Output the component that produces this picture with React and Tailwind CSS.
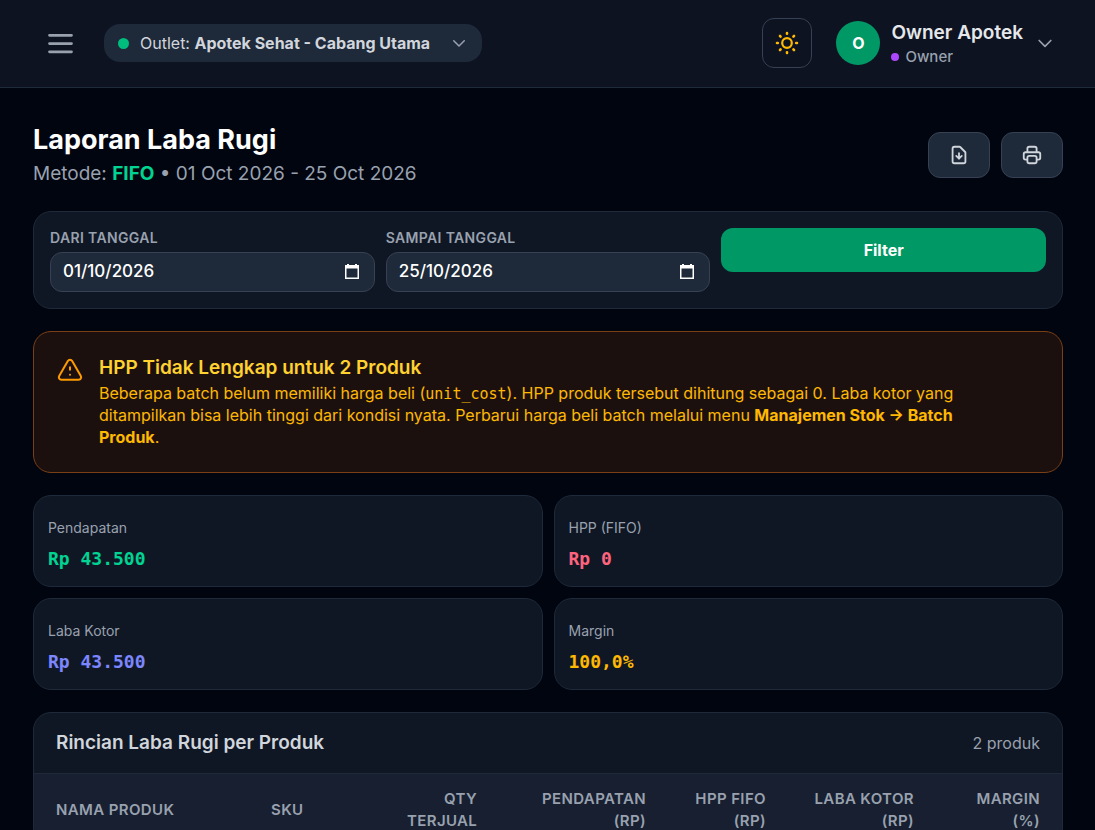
import { useState } from "react";

const STATS = [
  { label: "Pendapatan", value: "Rp 43.500", color: "text-emerald-400" },
  { label: "HPP (FIFO)", value: "Rp 0", color: "text-rose-400" },
  { label: "Laba Kotor", value: "Rp 43.500", color: "text-indigo-400" },
  { label: "Margin", value: "100,0%", color: "text-amber-400" },
];

const COLUMNS = [
  { label: "Nama Produk", width: "w-[215px]", align: "text-left" },
  { label: "SKU", width: "w-[136px]", align: "text-left" },
  { label: "Qty Terjual", width: "w-[114px]", align: "text-right" },
  { label: "Pendapatan (Rp)", width: "w-[169px]", align: "text-right" },
  { label: "HPP FIFO (Rp)", width: "w-[120px]", align: "text-right" },
  { label: "Laba Kotor (Rp)", width: "w-[148px]", align: "text-right" },
  { label: "Margin (%)", width: "w-[126px]", align: "text-right" },
];

const ChevronDown = ({ className }) => (
  <svg className={className} fill="none" viewBox="0 0 24 24" stroke="currentColor">
    <path strokeLinecap="round" strokeLinejoin="round" strokeWidth={2} d="M19 9l-7 7-7-7" />
  </svg>
);

const Header = () => (
  <header className="flex items-center justify-between border-b border-gray-800 bg-[#0d1321] pt-[18px] pr-10 pb-[19px] pl-11">
    <div className="flex items-center gap-[27px]">
      <button type="button" aria-label="Buka menu" className="text-gray-400">
        <svg className="h-[33px] w-[33px]" fill="none" viewBox="0 0 24 24" stroke="currentColor">
          <path strokeLinecap="round" strokeWidth={2} d="M4 6h16M4 12h16M4 18h16" />
        </svg>
      </button>
      <button
        type="button"
        className="flex h-[38px] items-center rounded-2xl bg-gray-800 px-[14px] text-base text-gray-300"
      >
        <span className="mr-[11px] h-[11px] w-[11px] rounded-full bg-emerald-500" />
        <span>
          Outlet: <span className="font-bold">Apotek Sehat - Cabang Utama</span>
        </span>
        <ChevronDown className="ml-5 h-[18px] w-[18px] text-gray-400" />
      </button>
    </div>

    <div className="flex items-center gap-6">
      <button
        type="button"
        aria-label="Ganti tema"
        className="flex h-[50px] w-[50px] items-center justify-center rounded-xl border border-gray-700 text-amber-400"
      >
        <svg className="h-6 w-6" fill="none" viewBox="0 0 24 24" stroke="currentColor">
          <circle cx="12" cy="12" r="4.8" strokeWidth={2.2} />
          <path
            strokeLinecap="round"
            strokeWidth={2.6}
            d="M12 2v.8M12 21.2v.8M2 12h.8M21.2 12h.8M5 5l.6.6M18.4 18.4l.6.6M5 19l.6-.6M18.4 5.6l.6-.6"
          />
        </svg>
      </button>
      <button type="button" className="flex items-center text-left">
        <span className="mr-[11px] flex h-11 w-11 items-center justify-center rounded-full bg-emerald-600 text-base font-bold text-white">
          O
        </span>
        <span className="mr-3">
          <span className="block text-[19px] leading-7 font-semibold text-gray-200">Owner Apotek</span>
          <span className="flex items-center gap-[6px] text-[15px] leading-5 font-medium text-gray-400">
            <span className="h-2 w-2 rounded-full bg-purple-500" />
            Owner
          </span>
        </span>
        <ChevronDown className="h-5 w-5 text-gray-400" />
      </button>
    </div>
  </header>
);

const DateField = ({ id, label, value, onChange }) => (
  <div>
    <label htmlFor={id} className="mb-1 block text-sm leading-5 font-semibold tracking-wide text-gray-400 uppercase">
      {label}
    </label>
    <div className="flex h-10 items-center rounded-xl border border-gray-700 bg-gray-800 px-3">
      <input
        id={id}
        type="text"
        inputMode="numeric"
        value={value}
        onChange={(e) => onChange(e.target.value)}
        className="min-w-0 flex-1 bg-transparent text-[17px] font-medium text-white outline-none"
      />
      <button type="button" aria-label={`Pilih ${label}`} className="px-[2px] text-white">
        <svg className="h-4 w-4" viewBox="0 0 16 16" fill="currentColor">
          <path d="M3 0h2v1h6V0h2v1h2v14H1V1h2zM2.5 4.500v9h11v-9z" fillRule="evenodd" />
        </svg>
      </button>
    </div>
  </div>
);

const App = () => {
  const [from, setFrom] = useState("01/10/2026");
  const [to, setTo] = useState("25/10/2026");

  return (
    <div className="min-h-screen bg-[#01050f] font-['Inter',sans-serif] text-gray-300">
      <Header />

      <main className="flex flex-col gap-[22px] pt-[33px] pr-8 pb-8 pl-[33px]">
        {/* Title + export buttons */}
        <div className="flex items-center justify-between">
          <div>
            <h1 className="text-[27px] leading-[38px] font-bold text-white">Laporan Laba Rugi</h1>
            <p className="text-[19px] leading-[30px] text-gray-400">
              Metode: <span className="font-bold text-emerald-400">FIFO</span> • 01 Oct 2026 - 25 Oct 2026
            </p>
          </div>
          <div className="flex gap-[11px] text-gray-300">
            <button
              type="button"
              aria-label="Unduh laporan"
              className="flex h-[46px] w-[62px] items-center justify-center rounded-xl border border-gray-700 bg-gray-800"
            >
              <svg className="h-[22px] w-[22px]" fill="none" viewBox="0 0 24 24" stroke="currentColor">
                <path
                  strokeLinecap="round"
                  strokeLinejoin="round"
                  strokeWidth={2}
                  d="M12 10v6m0 0l-3-3m3 3l3-3m2 8H7a2 2 0 01-2-2V5a2 2 0 012-2h5.586a1 1 0 01.707.293l5.414 5.414a1 1 0 01.293.707V19a2 2 0 01-2 2z"
                />
              </svg>
            </button>
            <button
              type="button"
              aria-label="Cetak laporan"
              className="flex h-[46px] w-[62px] items-center justify-center rounded-xl border border-gray-700 bg-gray-800"
            >
              <svg className="h-[22px] w-[22px]" fill="none" viewBox="0 0 24 24" stroke="currentColor">
                <path
                  strokeLinecap="round"
                  strokeLinejoin="round"
                  strokeWidth={2}
                  d="M17 17h2a2 2 0 002-2v-4a2 2 0 00-2-2H5a2 2 0 00-2 2v4a2 2 0 002 2h2m2 4h6a2 2 0 002-2v-4a2 2 0 00-2-2H9a2 2 0 00-2 2v4a2 2 0 002 2zm8-12V5a2 2 0 00-2-2H9a2 2 0 00-2 2v4h10z"
                />
              </svg>
            </button>
          </div>
        </div>

        {/* Filter */}
        <form
          onSubmit={(e) => e.preventDefault()}
          className="grid grid-cols-3 items-start gap-[11px] rounded-[18px] border border-gray-800 bg-[#0f1724] p-4"
        >
          <DateField id="from" label="Dari Tanggal" value={from} onChange={setFrom} />
          <DateField id="to" label="Sampai Tanggal" value={to} onChange={setTo} />
          <button type="submit" className="h-11 rounded-xl bg-emerald-600 text-base font-bold text-white">
            Filter
          </button>
        </form>

        {/* Incomplete cost warning */}
        <section className="flex gap-[14px] rounded-[18px] border border-[#7b3f16] bg-[#1c100f] px-[21px] py-[22px]">
          <svg className="mt-[2px] h-[30px] w-[30px] shrink-0 text-amber-500" fill="none" viewBox="0 0 24 24" stroke="currentColor">
            <path
              strokeLinecap="round"
              strokeLinejoin="round"
              strokeWidth={1.6}
              d="M12 9v2m0 4h.01m-6.938 4h13.856c1.54 0 2.502-1.667 1.732-3L13.732 4c-.77-1.333-2.694-1.333-3.464 0L3.34 16c-.77 1.333.192 3 1.732 3z"
            />
          </svg>
          <div className="pr-10 pb-[2px]">
            <h2 className="text-[19px] leading-7 font-semibold text-amber-300">
              HPP Tidak Lengkap untuk 2 Produk
            </h2>
            <p className="text-base leading-[22px] text-amber-400">
              Beberapa batch belum memiliki harga beli (
              <code className="font-['DejaVu_Sans_Mono',monospace] text-[15px] leading-none">unit_cost</code>). HPP
              produk tersebut dihitung sebagai 0. Laba kotor yang ditampilkan bisa lebih tinggi dari kondisi nyata.
              Perbarui harga beli batch melalui menu{" "}
              <strong className="font-bold">Manajemen Stok → Batch Produk</strong>.
            </p>
          </div>
        </section>

        {/* Summary cards */}
        <div className="grid grid-cols-2 gap-[11px]">
          {STATS.map(({ label, value, color }) => (
            <div key={label} className="rounded-[18px] border border-gray-800 bg-[#0f1724] px-[14px] pt-[22px] pb-[14px]">
              <p className="text-sm leading-5 text-gray-400">{label}</p>
              <p className={`mt-2 font-['DejaVu_Sans_Mono',monospace] text-lg leading-[26px] font-bold ${color}`}>
                {value}
              </p>
            </div>
          ))}
        </div>

        {/* Product breakdown */}
        <section className="overflow-hidden rounded-[18px] border border-gray-800 bg-[#0f1724]">
          <div className="flex h-[60px] items-center justify-between px-[22px]">
            <h2 className="text-[19px] leading-7 font-semibold text-gray-300">Rincian Laba Rugi per Produk</h2>
            <span className="text-base text-gray-400">2 produk</span>
          </div>
          <table className="w-full table-fixed border-t border-gray-800">
            <thead className="bg-[#171f30]">
              <tr>
                {COLUMNS.map((col) => (
                  <th
                    key={col.label}
                    scope="col"
                    className={`px-[22px] py-[14px] text-[15px] leading-[22px] font-semibold tracking-wide text-gray-400 uppercase ${col.width} ${col.align}`}
                  >
                    {col.label}
                  </th>
                ))}
              </tr>
            </thead>
          </table>
        </section>
      </main>
    </div>
  );
};

export default App;
